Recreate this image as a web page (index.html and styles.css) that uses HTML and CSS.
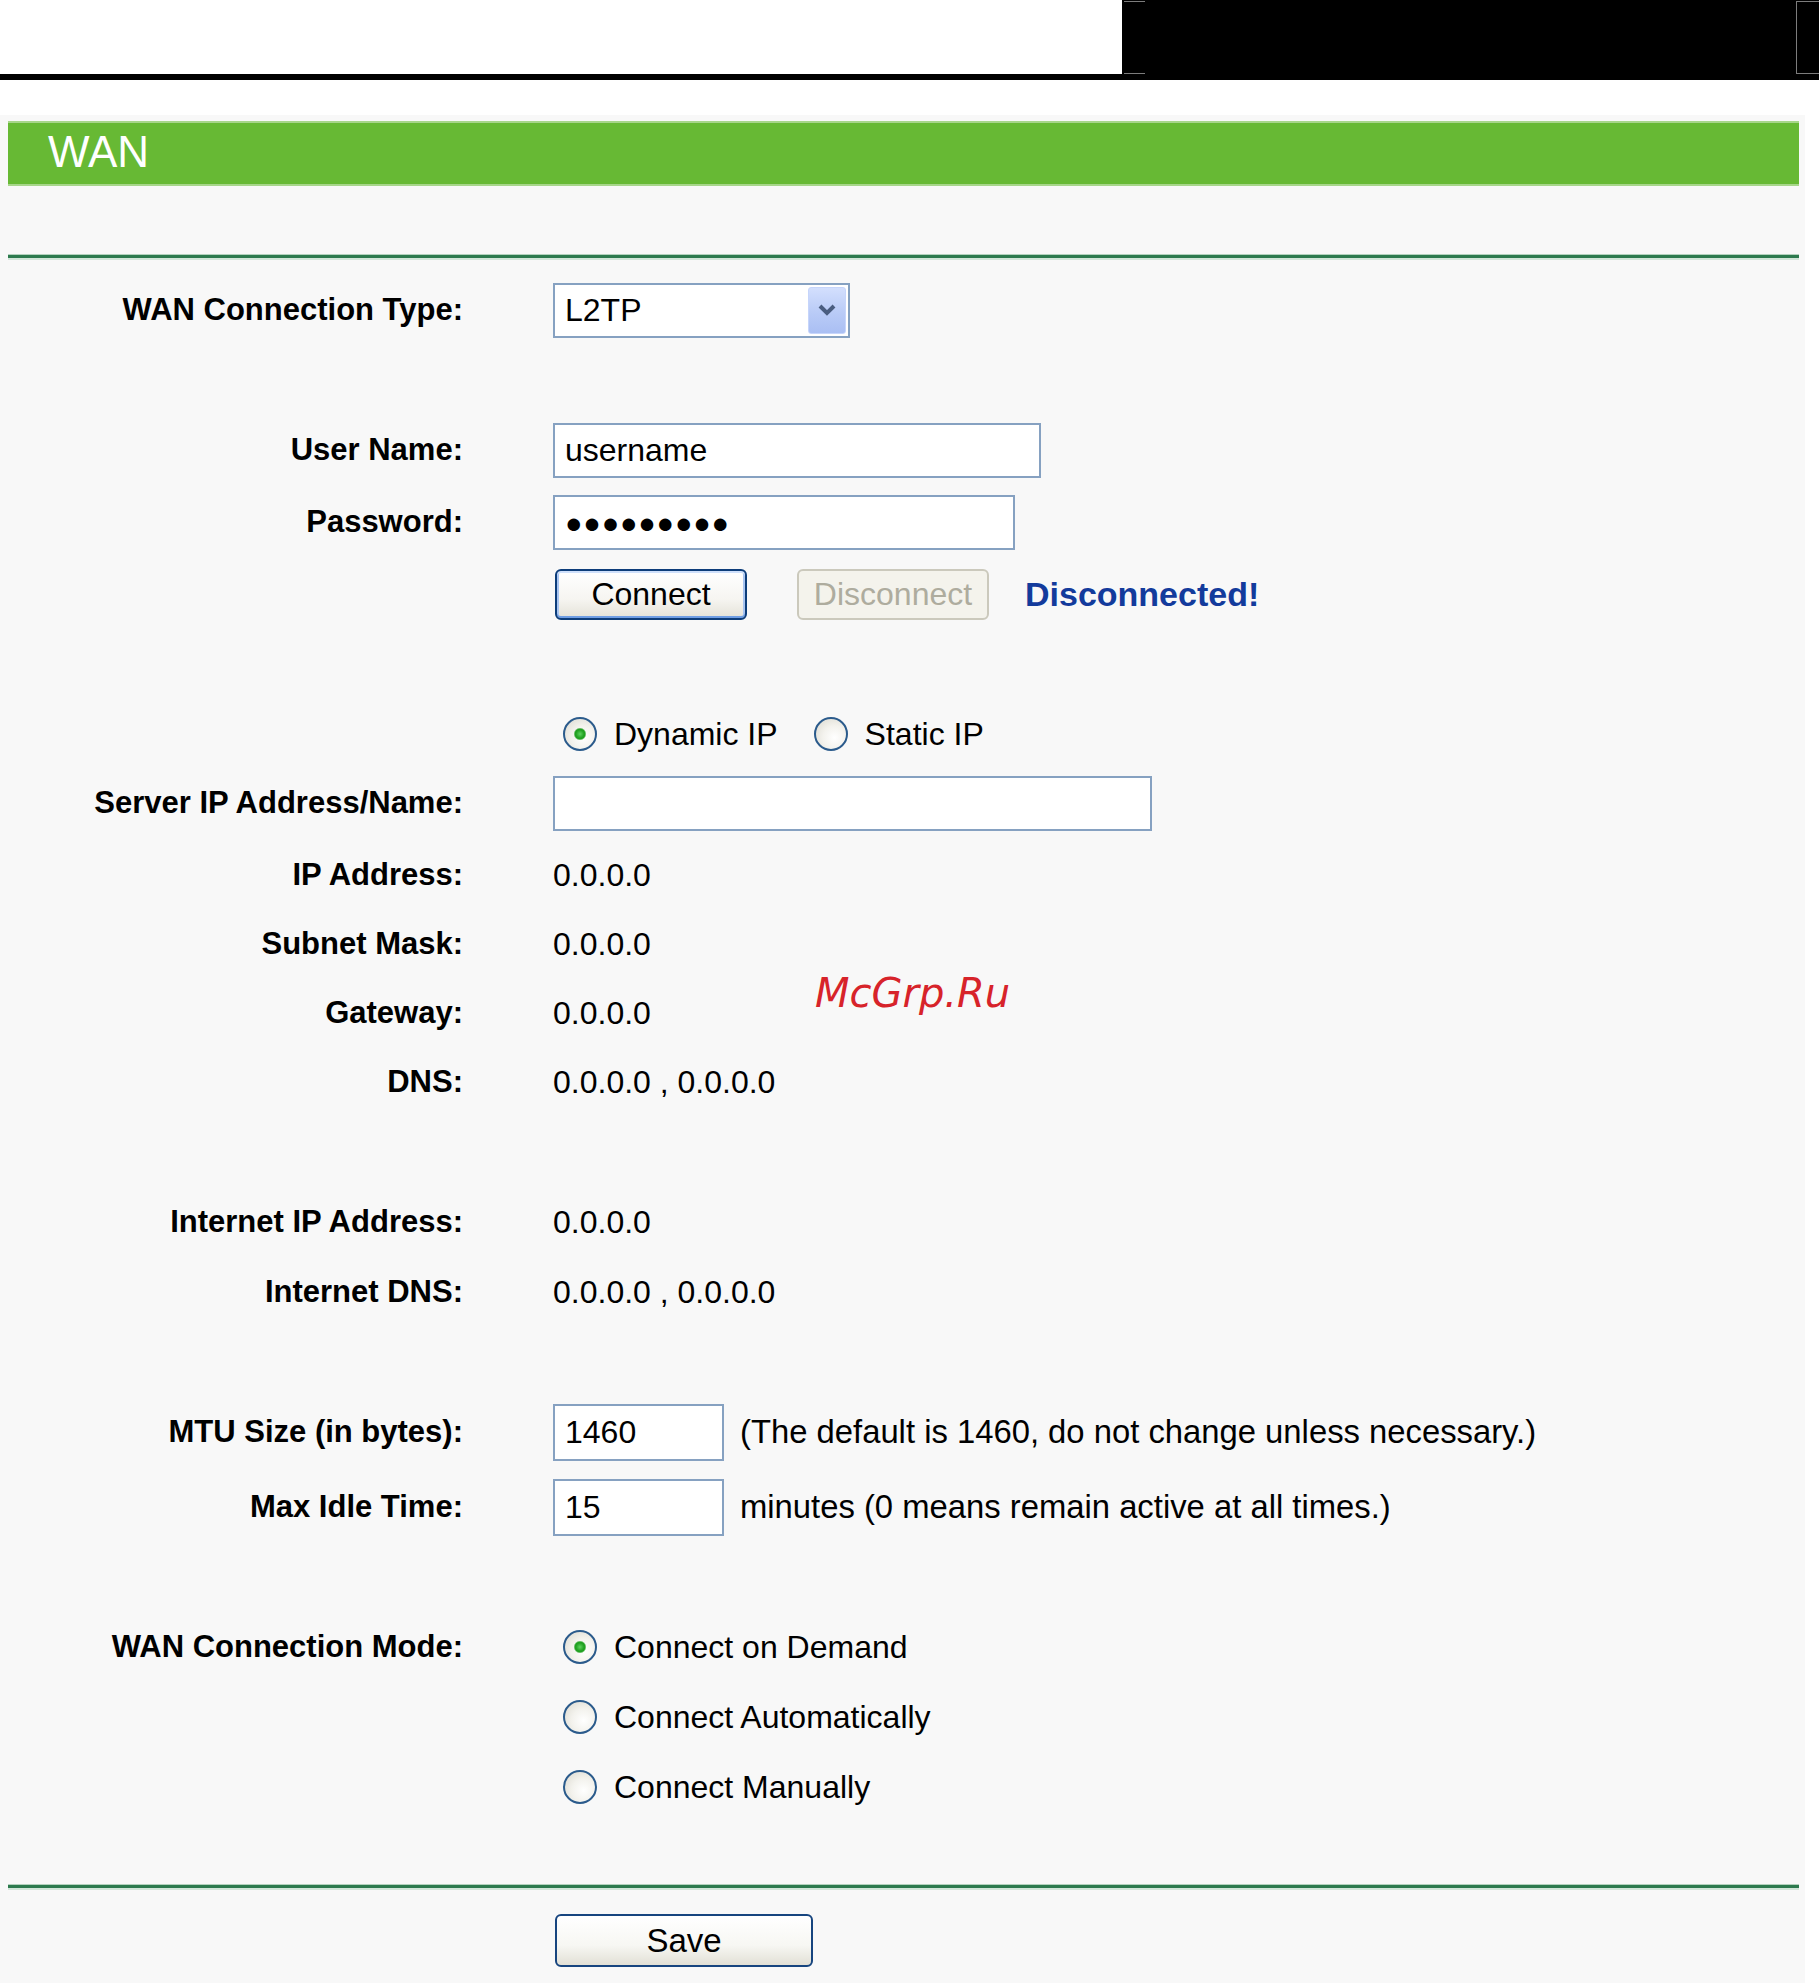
FILE: index.html
```html
<!DOCTYPE html>
<html lang="en">
<head>
<meta charset="utf-8">
<title>WAN</title>
<link rel="stylesheet" href="styles.css">
</head>
<body>
<div class="topbar">
  <div class="topbar-space"></div>
  <div class="blackbox">
    <span class="mark-l"></span>
    <span class="mark-r"></span>
  </div>
</div>
<div class="blackline"></div>

<div class="panel">
  <div class="title-bar">WAN</div>
  <div class="divider"></div>

  <div class="form">
    <div class="section">
      <div class="row">
        <div class="label">WAN Connection Type:</div>
        <div class="value">
          <div class="select">
            <span class="select-text">L2TP</span>
            <span class="select-btn">
              <svg width="20" height="14" viewBox="0 0 20 14"><path d="M3 3 L10 10 L17 3" fill="none" stroke="#4a5d80" stroke-width="4"/></svg>
            </span>
          </div>
        </div>
      </div>
    </div>

    <div class="section sec-2">
      <div class="row">
        <div class="label">User Name:</div>
        <div class="value"><input class="input w-user" type="text" value="username"></div>
      </div>
      <div class="row">
        <div class="label">Password:</div>
        <div class="value"><input class="input w-pass pass" type="text" value="●●●●●●●●●"></div>
      </div>
      <div class="row">
        <div class="label"></div>
        <div class="value buttons">
          <button class="btn btn-connect">Connect</button>
          <button class="btn btn-disabled" disabled>Disconnect</button>
          <span class="status">Disconnected!</span>
        </div>
      </div>
    </div>

    <div class="section sec-3">
      <div class="row">
        <div class="label"></div>
        <div class="value radios">
          <label class="radio-item"><input class="radio" type="radio" name="ip" checked><span>Dynamic IP</span></label>
          <label class="radio-item"><input class="radio" type="radio" name="ip"><span>Static IP</span></label>
        </div>
      </div>
      <div class="row">
        <div class="label">Server IP Address/Name:</div>
        <div class="value"><input class="input w-server" type="text" value=""></div>
      </div>
      <div class="row row-shift">
        <div class="label">IP Address:</div>
        <div class="value text">0.0.0.0</div>
      </div>
      <div class="row">
        <div class="label">Subnet Mask:</div>
        <div class="value text">0.0.0.0</div>
      </div>
      <div class="row">
        <div class="label">Gateway:</div>
        <div class="value text">0.0.0.0</div>
      </div>
      <div class="row">
        <div class="label">DNS:</div>
        <div class="value text">0.0.0.0 , 0.0.0.0</div>
      </div>
    </div>

    <div class="section sec-4">
      <div class="row">
        <div class="label">Internet IP Address:</div>
        <div class="value text">0.0.0.0</div>
      </div>
      <div class="row">
        <div class="label">Internet DNS:</div>
        <div class="value text">0.0.0.0 , 0.0.0.0</div>
      </div>
    </div>

    <div class="section sec-5">
      <div class="row">
        <div class="label">MTU Size (in bytes):</div>
        <div class="value">
          <input class="input small" type="text" value="1460">
          <span class="note">(The default is 1460, do not change unless necessary.)</span>
        </div>
      </div>
      <div class="row">
        <div class="label">Max Idle Time:</div>
        <div class="value">
          <input class="input small" type="text" value="15">
          <span class="note">minutes (0 means remain active at all times.)</span>
        </div>
      </div>
    </div>

    <div class="section">
      <div class="row row-top">
        <div class="label label-tall">WAN Connection Mode:</div>
        <div class="value mode-list">
          <label class="radio-item mode"><input class="radio" type="radio" name="mode" checked><span>Connect on Demand</span></label>
          <label class="radio-item mode"><input class="radio" type="radio" name="mode"><span>Connect Automatically</span></label>
          <label class="radio-item mode"><input class="radio" type="radio" name="mode"><span>Connect Manually</span></label>
        </div>
      </div>
    </div>
  </div>

  <div class="divider divider-bottom"></div>

  <div class="save-row">
    <button class="btn btn-save">Save</button>
  </div>

  <div class="watermark">McGrp.Ru</div>
</div>
</body>
</html>
```
FILE: styles.css
```css
* {
  box-sizing: border-box;
}

html, body {
  margin: 0;
  padding: 0;
  background: #ffffff;
}

body {
  width: 1819px;
  font-family: "Liberation Sans", Arial, sans-serif;
  color: #000;
}

/* top header */
.topbar {
  display: flex;
  height: 74px;
}

.topbar-space {
  flex: 1;
  background: #fff;
}

.blackbox {
  width: 697px;
  background: #000;
  display: flex;
  justify-content: space-between;
  align-items: flex-start;
}

.mark-l {
  display: block;
  margin: 1px 0 0 2px;
  width: 21px;
  height: 73px;
  border-top: 1px solid #7c7c7c;
  border-bottom: 1px solid #7c7c7c;
}

.mark-r {
  display: block;
  margin-top: 1px;
  width: 23px;
  height: 73px;
  border: 1px solid #7c7c7c;
  border-right: none;
}

.blackline {
  height: 6px;
  background: #000;
}

/* panel */
.panel {
  position: relative;
  margin-top: 35px;
  margin-right: 14px;
  background: #f8f8f8;
  padding-top: 6px;
  padding-bottom: 17px;
}

.title-bar {
  margin: 0 6px 0 8px;
  height: 65px;
  background: #67b934;
  border-top: 2px solid #a7d68a;
  border-bottom: 2px solid #a7d68a;
  color: #fff;
  font-size: 44px;
  line-height: 1;
  display: flex;
  align-items: center;
  padding-left: 40px;
  padding-bottom: 4px;
}

.divider {
  margin: 68px 6px 0 8px;
  height: 6px;
  border-top: 1px solid #b3d2bd;
  border-bottom: 2px solid #d2e5d8;
  background: #2d7a4e;
}

/* form */
.form {
  display: flex;
  flex-direction: column;
  gap: 82px;
  padding-top: 21px;
}

.section {
  display: flex;
  flex-direction: column;
  gap: 12px;
}

.sec-2 {
  gap: 14px;
}

.sec-3 {
  gap: 11px;
}

.sec-5 {
  gap: 17px;
}

.row {
  display: flex;
  align-items: center;
  min-height: 58px;
}

.row-shift {
  margin-top: 3px;
}

.row-top {
  align-items: flex-start;
}

.label {
  width: 463px;
  flex-shrink: 0;
  text-align: right;
  font-weight: bold;
  font-size: 31px;
}

.label-tall {
  height: 58px;
  line-height: 58px;
}

.value {
  margin-left: 90px;
  display: flex;
  align-items: center;
}

.text {
  font-size: 32px;
}

/* select */
.select {
  width: 297px;
  height: 55px;
  border: 2px solid #86a1c1;
  background: #fff;
  display: flex;
  align-items: center;
  justify-content: space-between;
  padding-left: 10px;
  padding-right: 2px;
  font-size: 32px;
}

.select-btn {
  width: 38px;
  height: 47px;
  border-radius: 3px;
  border: 1px solid #c6d5fb;
  background: linear-gradient(180deg, #d3dffd 0%, #b9cbf7 55%, #aabff3 100%);
  display: flex;
  align-items: center;
  justify-content: center;
}

/* inputs */
.input {
  height: 55px;
  border: 2px solid #86a1c1;
  background: #fff;
  font-family: "Liberation Sans", Arial, sans-serif;
  font-size: 32px;
  color: #000;
  padding: 0 10px;
  margin: 0;
  outline: none;
}

.w-user {
  width: 488px;
}

.w-pass {
  width: 462px;
}

.pass {
  font-size: 29px;
  letter-spacing: 0.8px;
  padding-top: 2px;
}

.w-server {
  width: 599px;
}

.small {
  width: 171px;
  height: 57px;
}

.note {
  margin-left: 16px;
  font-size: 32.8px;
}

/* buttons */
.buttons {
  padding-left: 2px;
}

.btn {
  font-family: "Liberation Sans", Arial, sans-serif;
  font-size: 32px;
  color: #000;
  height: 51px;
  width: 192px;
  border-radius: 6px;
  padding: 0;
  margin: 0;
}

.btn-connect {
  border: 2px solid #0d3d7a;
  background: linear-gradient(180deg, #ffffff 0%, #f6f5f1 60%, #e4e2d8 100%);
  box-shadow: inset 0 2px 0 #cfe0fb, inset 0 -2px 0 #6f9ee4, inset 2px 0 0 #a9c5f1, inset -2px 0 0 #a9c5f1;
}

.btn-disabled {
  margin-left: 50px;
  border: 2px solid #cbc9bc;
  background: #f4f3ec;
  color: #aeac9e;
}

.status {
  margin-left: 36px;
  font-weight: bold;
  font-size: 34px;
  color: #133b9c;
}

.btn-save {
  width: 258px;
  height: 53px;
  font-size: 33px;
  border: 2px solid #17457f;
  background: linear-gradient(180deg, #ffffff 0%, #f7f7f3 60%, #e2e0d6 100%);
}

/* radios */
.radios {
  padding-left: 10px;
  gap: 36px;
}

.radio-item {
  display: flex;
  align-items: center;
  gap: 17px;
  font-size: 32px;
}

.radio {
  -webkit-appearance: none;
  appearance: none;
  width: 34px;
  height: 34px;
  margin: 0;
  border-radius: 50%;
  border: 2px solid #2b5b8c;
  background: radial-gradient(circle at 62% 62%, #ffffff 0%, #f3f2ed 45%, #d9d7cd 100%);
  flex-shrink: 0;
}

.radio:checked {
  background:
    radial-gradient(circle, #5fd35f 0, #21a121 4px, #21a121 5px, rgba(255,255,255,0) 6.5px),
    radial-gradient(circle at 62% 62%, #ffffff 0%, #f3f2ed 45%, #d9d7cd 100%);
}

.mode-list {
  flex-direction: column;
  align-items: flex-start;
  gap: 12px;
  padding-left: 10px;
}

.mode {
  height: 58px;
}

/* bottom */
.divider-bottom {
  margin-top: 68px;
}

.save-row {
  display: flex;
  padding-left: 555px;
  margin-top: 24px;
}

/* watermark overlay */
.watermark {
  position: absolute;
  left: 815px;
  top: 858px;
  font-family: "DejaVu Sans", sans-serif;
  font-style: italic;
  font-size: 40px;
  line-height: 40px;
  color: #d7232a;
}
```
